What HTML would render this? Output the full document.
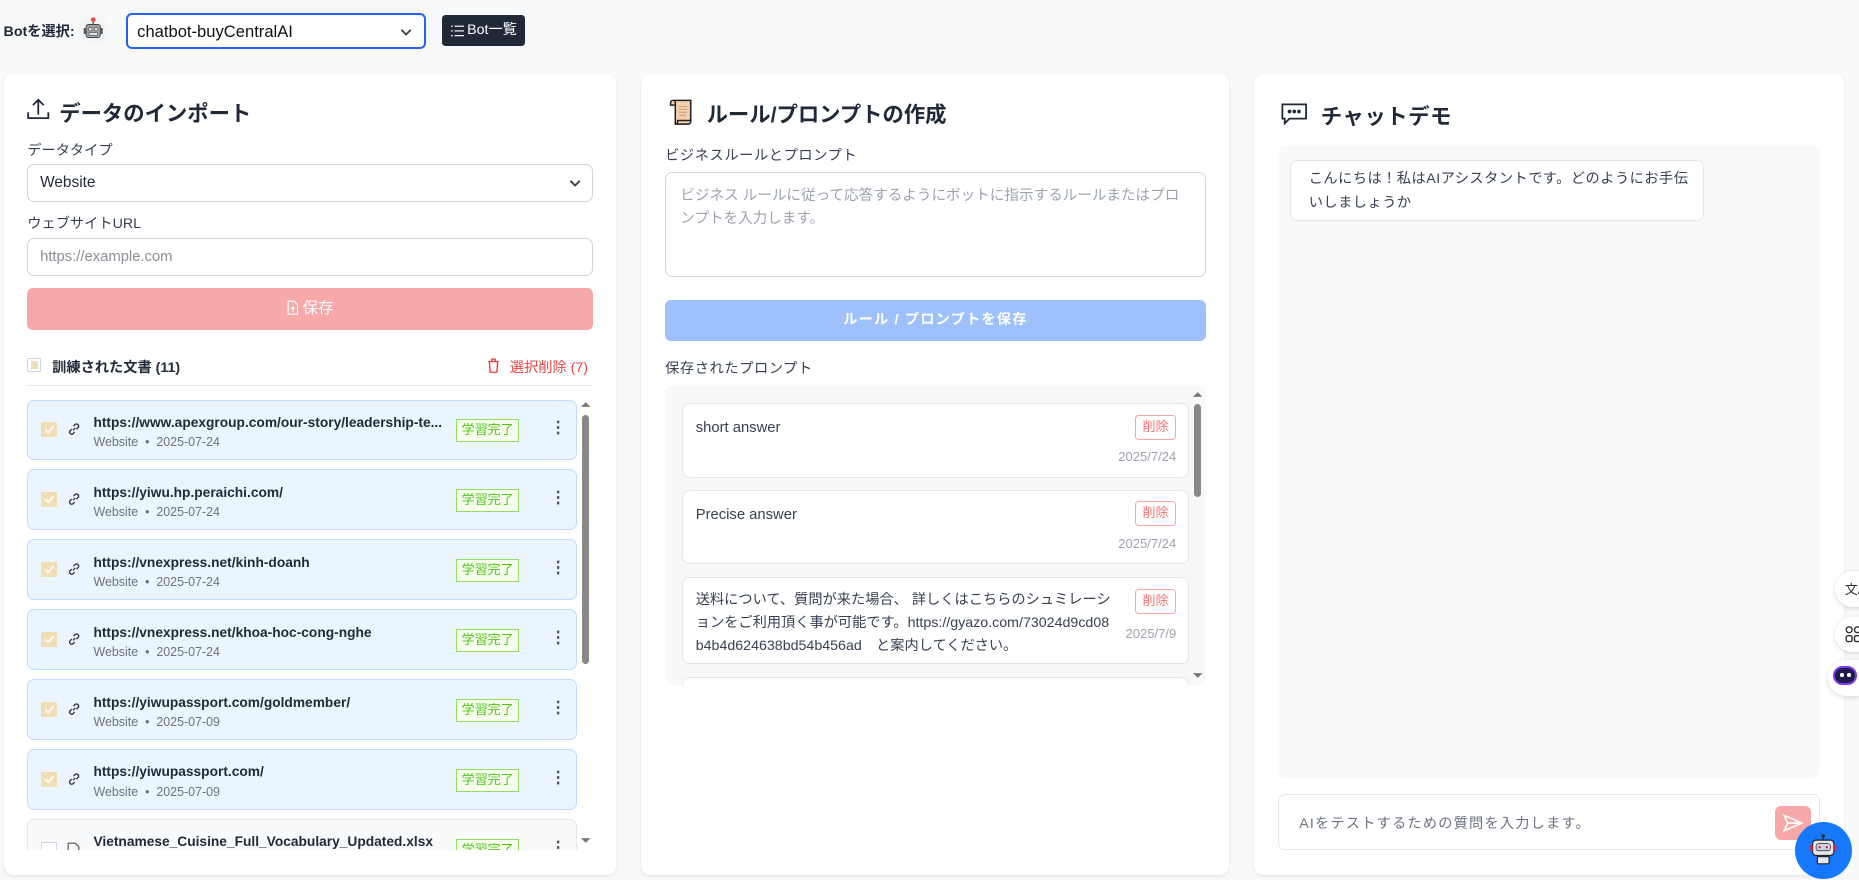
<!DOCTYPE html>
<html><head><meta charset="utf-8"><style>
html,body{margin:0;padding:0;width:1859px;height:880px;overflow:hidden;background:#f8f9fb}
#w{zoom:1.18559;width:1568px;height:742px;position:relative;font-family:"Liberation Sans","Noto Sans CJK JP",sans-serif;color:#1f2937}
.a{position:absolute}
.panel{position:absolute;top:62px;height:676px;background:#fff;border-radius:8px;box-shadow:0 1px 3px rgba(0,0,0,.08)}
.h{font-size:18px;font-weight:bold;color:#1f2937}
.lbl{font-size:12px;color:#374151}
.box{position:absolute;border:1px solid #d1d5db;border-radius:6px;background:#fff;box-sizing:border-box}
.item{position:absolute;left:20px;width:464px;height:51px;box-sizing:border-box;background:#ebf5ff;border:1px solid #bfdbfe;border-radius:6px}
.cb{position:absolute;left:11px;top:18px;width:13px;height:13px;background:#f0dfb5;border-radius:1px}
.cb svg{position:absolute;left:2px;top:2px}
.t{position:absolute;left:55px;top:12px;font-size:11.6px;font-weight:bold;color:#1f2937;white-space:nowrap;max-width:300px;overflow:hidden;text-overflow:ellipsis}
.s{position:absolute;left:55px;top:29px;font-size:10.5px;color:#6b7280;white-space:nowrap}
.bd{position:absolute;left:361px;top:16px;width:53px;height:19px;box-sizing:border-box;border:1px solid #95de64;background:#f6ffed;color:#52c41a;font-size:11px;text-align:center;line-height:17px}
.dt{position:absolute;left:440px;top:15px;font-size:14px;color:#555;font-weight:bold}
.lk{position:absolute;left:33px;top:18px}
.pi{position:absolute;left:14px;width:428px;background:#fff;border:1px solid #e5e7eb;border-radius:6px;box-sizing:border-box}
.pi .x{position:absolute;left:11px;top:11px;font-size:12.5px;color:#374151;line-height:20px}
.del{position:absolute;right:10px;top:9px;width:35px;height:21px;box-sizing:border-box;border:1px solid #fca5a5;border-radius:3px;color:#f87171;font-size:11px;text-align:center;line-height:19px}
.dd{position:absolute;right:10px;font-size:11px;color:#9ca3af}
.fc{position:absolute;left:1548px;width:40px;height:30px;border-radius:15px;background:#fff;box-shadow:0 1px 4px rgba(0,0,0,.15)}
</style></head><body><div id="w">

<!-- top bar -->
<div class="a" style="left:3px;top:18px;font-size:12px;font-weight:bold">Botを選択:</div>
<div class="a" style="left:67px;top:13px;width:24px;height:24px;border-radius:50%;background:#f3f4f6">
<svg width="24" height="24" viewBox="0 0 24 24"><line x1="12" y1="4" x2="12" y2="8" stroke="#555" stroke-width="1"/><circle cx="12" cy="4" r="2" fill="#e74c3c"/><rect x="6" y="8" width="12" height="11" rx="2" fill="#9ca3af" stroke="#444" stroke-width=".8"/><rect x="4" y="11" width="2" height="5" fill="#555"/><rect x="18" y="11" width="2" height="5" fill="#555"/><circle cx="9.5" cy="12" r="1.5" fill="#f5e6a8" stroke="#333" stroke-width=".5"/><circle cx="14.5" cy="12" r="1.5" fill="#f5e6a8" stroke="#333" stroke-width=".5"/><rect x="8.5" y="15" width="7" height="2" fill="#eee" stroke="#333" stroke-width=".4"/></svg></div>
<div class="a" style="left:106px;top:11px;width:253px;height:30px;box-sizing:border-box;border:2px solid #2563eb;border-radius:5px;background:#fff">
<div class="a" style="left:8px;top:6px;font-size:14px;color:#111">chatbot-buyCentralAI</div>
<svg class="a" style="left:229px;top:8px" width="12" height="12" viewBox="0 0 12 12"><path d="M2 4l4 4 4-4" fill="none" stroke="#444" stroke-width="1.6"/></svg></div>
<div class="a" style="left:373px;top:13px;width:70px;height:26px;background:#1f2937;border-radius:3px;color:#fff;font-size:12px;line-height:26px">
<svg class="a" style="left:7px;top:8px" width="11" height="10" viewBox="0 0 11 10"><g stroke="#fff" stroke-width="1"><line x1="0" y1="1" x2="1.5" y2="1"/><line x1="3" y1="1" x2="11" y2="1"/><line x1="0" y1="5" x2="1.5" y2="5"/><line x1="3" y1="5" x2="11" y2="5"/><line x1="0" y1="9" x2="1.5" y2="9"/><line x1="3" y1="9" x2="11" y2="9"/></g></svg>
<span class="a" style="left:21px;top:0">Bot一覧</span></div>

<!-- panel 1 -->
<div class="panel" style="left:3px;width:517px">
<svg class="a" style="left:20px;top:21px" width="19" height="19" viewBox="0 0 19 19" fill="none" stroke="#1f2937" stroke-width="1.5"><path d="M1 12v5h17v-5"/><path d="M9.5 14V2M5 6l4.5-4.5L14 6"/></svg>
<div class="a h" style="left:47px;top:20px">データのインポート</div>
<div class="a lbl" style="left:20px;top:56px">データタイプ</div>
<div class="box" style="left:20px;top:76px;width:477px;height:32px"><span class="a" style="left:10px;top:8px;font-size:13px">Website</span>
<svg class="a" style="left:455px;top:10px" width="12" height="12" viewBox="0 0 12 12"><path d="M2 4l4 4 4-4" fill="none" stroke="#444" stroke-width="1.6"/></svg></div>
<div class="a lbl" style="left:20px;top:118px">ウェブサイトURL</div>
<div class="box" style="left:20px;top:139px;width:477px;height:32px"><span class="a" style="left:10px;top:8px;font-size:12.5px;color:#8b8f96">https://example.com</span></div>
<div class="a" style="left:20px;top:181px;width:477px;height:35px;background:#f7a8a8;border-radius:5px;color:#fff;font-size:13px;text-align:center;line-height:35px">
<svg style="vertical-align:-2px" width="10" height="13" viewBox="0 0 10 13" fill="none" stroke="#fff" stroke-width="1"><path d="M1 1h5l3 3v8H1z"/><path d="M5 10V6M3.5 7.5L5 6l1.5 1.5"/></svg> 保存</div>
<div class="a" style="left:20px;top:240px;width:12px;height:12px;border:1px solid #d1d5db;box-sizing:border-box;background:#fff"><div class="a" style="left:2px;top:2px;width:6px;height:6px;background:#eedfb8"></div></div>
<div class="a" style="left:41px;top:239px;font-size:12px;font-weight:bold">訓練された文書 (11)</div>
<svg class="a" style="left:408px;top:240px" width="11" height="13" viewBox="0 0 11 13" fill="none" stroke="#ef4444" stroke-width="1.2"><path d="M1 3h9M4 3V1h3v2M2 3l.7 9h5.6L9 3"/></svg>
<div class="a" style="left:427px;top:239px;font-size:12px;color:#ef4444">選択削除 (7)</div>
<div class="a" style="left:20px;top:263px;width:477px;height:1px;background:#e5e7eb"></div>
<div class="a" style="left:0;top:274px;width:517px;height:381px;overflow:hidden">
<div class="item" style="top:1px"><div class="cb"><svg width="9" height="9" viewBox="0 0 9 9"><path d="M1 4.5l2.5 2.5L8 2" fill="none" stroke="#fff" stroke-width="1.5"/></svg></div><svg class="lk" width="12" height="12" viewBox="0 0 12 12" fill="none" stroke="#333" stroke-width="1.1"><path d="M5 7l2-2M4 6L2.5 7.5a1.8 1.8 0 002.5 2.5L6.5 8.5M8 6l1.5-1.5A1.8 1.8 0 007 2L5.5 3.5"/></svg><div class="t">https://www.apexgroup.com/our-story/leadership-te...</div><div class="s">Website &nbsp;•&nbsp; 2025-07-24</div><div class="bd">学習完了</div><div class="dt">⋮</div></div>
<div class="item" style="top:60px"><div class="cb"><svg width="9" height="9" viewBox="0 0 9 9"><path d="M1 4.5l2.5 2.5L8 2" fill="none" stroke="#fff" stroke-width="1.5"/></svg></div><svg class="lk" width="12" height="12" viewBox="0 0 12 12" fill="none" stroke="#333" stroke-width="1.1"><path d="M5 7l2-2M4 6L2.5 7.5a1.8 1.8 0 002.5 2.5L6.5 8.5M8 6l1.5-1.5A1.8 1.8 0 007 2L5.5 3.5"/></svg><div class="t">https://yiwu.hp.peraichi.com/</div><div class="s">Website &nbsp;•&nbsp; 2025-07-24</div><div class="bd">学習完了</div><div class="dt">⋮</div></div>
<div class="item" style="top:119px"><div class="cb"><svg width="9" height="9" viewBox="0 0 9 9"><path d="M1 4.5l2.5 2.5L8 2" fill="none" stroke="#fff" stroke-width="1.5"/></svg></div><svg class="lk" width="12" height="12" viewBox="0 0 12 12" fill="none" stroke="#333" stroke-width="1.1"><path d="M5 7l2-2M4 6L2.5 7.5a1.8 1.8 0 002.5 2.5L6.5 8.5M8 6l1.5-1.5A1.8 1.8 0 007 2L5.5 3.5"/></svg><div class="t">https://vnexpress.net/kinh-doanh</div><div class="s">Website &nbsp;•&nbsp; 2025-07-24</div><div class="bd">学習完了</div><div class="dt">⋮</div></div>
<div class="item" style="top:178px"><div class="cb"><svg width="9" height="9" viewBox="0 0 9 9"><path d="M1 4.5l2.5 2.5L8 2" fill="none" stroke="#fff" stroke-width="1.5"/></svg></div><svg class="lk" width="12" height="12" viewBox="0 0 12 12" fill="none" stroke="#333" stroke-width="1.1"><path d="M5 7l2-2M4 6L2.5 7.5a1.8 1.8 0 002.5 2.5L6.5 8.5M8 6l1.5-1.5A1.8 1.8 0 007 2L5.5 3.5"/></svg><div class="t">https://vnexpress.net/khoa-hoc-cong-nghe</div><div class="s">Website &nbsp;•&nbsp; 2025-07-24</div><div class="bd">学習完了</div><div class="dt">⋮</div></div>
<div class="item" style="top:237px"><div class="cb"><svg width="9" height="9" viewBox="0 0 9 9"><path d="M1 4.5l2.5 2.5L8 2" fill="none" stroke="#fff" stroke-width="1.5"/></svg></div><svg class="lk" width="12" height="12" viewBox="0 0 12 12" fill="none" stroke="#333" stroke-width="1.1"><path d="M5 7l2-2M4 6L2.5 7.5a1.8 1.8 0 002.5 2.5L6.5 8.5M8 6l1.5-1.5A1.8 1.8 0 007 2L5.5 3.5"/></svg><div class="t">https://yiwupassport.com/goldmember/</div><div class="s">Website &nbsp;•&nbsp; 2025-07-09</div><div class="bd">学習完了</div><div class="dt">⋮</div></div>
<div class="item" style="top:296px"><div class="cb"><svg width="9" height="9" viewBox="0 0 9 9"><path d="M1 4.5l2.5 2.5L8 2" fill="none" stroke="#fff" stroke-width="1.5"/></svg></div><svg class="lk" width="12" height="12" viewBox="0 0 12 12" fill="none" stroke="#333" stroke-width="1.1"><path d="M5 7l2-2M4 6L2.5 7.5a1.8 1.8 0 002.5 2.5L6.5 8.5M8 6l1.5-1.5A1.8 1.8 0 007 2L5.5 3.5"/></svg><div class="t">https://yiwupassport.com/</div><div class="s">Website &nbsp;•&nbsp; 2025-07-09</div><div class="bd">学習完了</div><div class="dt">⋮</div></div>
<div class="item" style="top:355px;background:#f9fafb;border-color:#e5e7eb"><div class="cb" style="background:#fff;border:1px solid #d1d5db;box-sizing:border-box"></div><svg class="lk" width="11" height="13" viewBox="0 0 11 13" fill="none" stroke="#555" stroke-width="1"><path d="M1 1h6l3 3v8H1z"/></svg><div class="t">Vietnamese_Cuisine_Full_Vocabulary_Updated.xlsx</div><div class="bd">学習完了</div><div class="dt">⋮</div></div>
</div>
<svg class="a" style="left:487px;top:276px" width="8" height="6"><path d="M0 5l4-4 4 4z" fill="#777"/></svg>
<div class="a" style="left:488px;top:288px;width:6px;height:210px;background:#888;border-radius:3px"></div>
<svg class="a" style="left:487px;top:644px" width="8" height="6"><path d="M0 1l4 4 4-4z" fill="#777"/></svg>
</div>

<!-- panel 2 -->
<div class="panel" style="left:541px;width:496px">
<svg class="a" style="left:22px;top:21px" width="24" height="24" viewBox="0 0 24 24"><path d="M5 2h15v18a2 2 0 01-2 2H7V4a2 2 0 00-2-2z" fill="#f5cfae" stroke="#222" stroke-width="1.3"/><path d="M5 2a2 2 0 00-2 2v2h4M7 22a2 2 0 002-2v-1h11" fill="#f5cfae" stroke="#222" stroke-width="1.3"/><g stroke="#c49a7a" stroke-width=".8"><line x1="10" y1="7" x2="17" y2="7"/><line x1="10" y1="9.5" x2="17" y2="9.5"/><line x1="10" y1="12" x2="17" y2="12"/><line x1="10" y1="14.5" x2="16" y2="14.5"/></g></svg>
<div class="a h" style="left:55px;top:21px">ルール/プロンプトの作成</div>
<div class="a lbl" style="left:20px;top:60px;letter-spacing:.5px">ビジネスルールとプロンプト</div>
<div class="box" style="left:20px;top:83px;width:456px;height:89px"><div class="a" style="left:12px;top:10px;right:10px;font-size:12.3px;color:#9ca3af;line-height:20px;letter-spacing:0">ビジネス ルールに従って応答するようにボットに指示するルールまたはプロンプトを入力します。</div></div>
<div class="a" style="left:20px;top:191px;width:456px;height:35px;background:#9ec1fb;border-radius:5px;color:#fff;font-size:12px;font-weight:bold;text-align:center;line-height:35px;letter-spacing:1px">ルール / プロンプトを保存</div>
<div class="a lbl" style="left:20px;top:240px;letter-spacing:.5px">保存されたプロンプト</div>
<div class="a" style="left:20px;top:264px;width:456px;height:252px;background:#f7f8fa;border-radius:6px;overflow:hidden">
<div class="pi" style="top:14px;height:63px"><div class="x">short answer</div><div class="del">削除</div><div class="dd" style="top:38px">2025/7/24</div></div>
<div class="pi" style="top:87px;height:63px"><div class="x">Precise answer</div><div class="del">削除</div><div class="dd" style="top:38px">2025/7/24</div></div>
<div class="pi" style="top:161px;height:73px"><div class="x" style="width:352px;top:9px;font-size:12px;line-height:19.5px;word-break:break-all">送料について、質問が来た場合、 詳しくはこちらのシュミレーションをご利用頂く事が可能です。https://gyazo.com/73024d9cd08b4b4d624638bd54b456ad　と案内してください。</div><div class="del">削除</div><div class="dd" style="top:40px">2025/7/9</div></div>
<div class="pi" style="top:245px;height:40px"></div>
</div>
<svg class="a" style="left:465px;top:268px" width="8" height="6"><path d="M0 5l4-4 4 4z" fill="#777"/></svg>
<div class="a" style="left:466px;top:279px;width:6px;height:78px;background:#888;border-radius:3px"></div>
<svg class="a" style="left:465px;top:505px" width="8" height="6"><path d="M0 1l4 4 4-4z" fill="#777"/></svg>
</div>

<!-- panel 3 -->
<div class="panel" style="left:1058px;width:497px">
<svg class="a" style="left:22px;top:24px" width="24" height="20" viewBox="0 0 24 20" fill="none" stroke="#1f2937" stroke-width="1.5"><path d="M2 2h20v12H8l-4 4v-4H2z"/><circle cx="8" cy="8" r=".8" fill="#1f2937"/><circle cx="12" cy="8" r=".8" fill="#1f2937"/><circle cx="16" cy="8" r=".8" fill="#1f2937"/></svg>
<div class="a h" style="left:56px;top:22px;letter-spacing:.5px">チャットデモ</div>
<div class="a" style="left:20px;top:60px;width:457px;height:535px;background:#f8f9fb;border-radius:8px"></div>
<div class="a" style="left:30px;top:73px;width:349px;height:51px;box-sizing:border-box;background:#fff;border:1px solid #e5e7eb;border-radius:6px"><div class="a" style="left:15px;top:6px;right:6px;font-size:12px;line-height:20px;color:#374151;letter-spacing:.4px">こんにちは！私はAIアシスタントです。どのようにお手伝いしましょうか</div></div>
<div class="box" style="left:20px;top:608px;width:457px;height:47px;border-color:#e5e7eb"><div class="a" style="left:17px;top:15px;font-size:12px;color:#6b7280;letter-spacing:1px">AIをテストするための質問を入力します。</div>
<div class="a" style="left:418px;top:9px;width:31px;height:29px;background:#f7a8a8;border-radius:5px"><svg class="a" style="left:7px;top:6px" width="17" height="17" viewBox="0 0 17 17" fill="none" stroke="#fff" stroke-width="1.4"><path d="M1 2l15 6.5L1 15l3-6.5z M4 8.5h12"/></svg></div></div>
</div>

<!-- floating -->
<div class="fc" style="top:482px"><span class="a" style="left:8px;top:6px;font-size:11px;color:#333">文A</span></div>
<div class="fc" style="top:520px"><svg class="a" style="left:8px;top:7px" width="14" height="16" viewBox="0 0 14 16" fill="none" stroke="#333" stroke-width="1.2"><circle cx="3.5" cy="4" r="2.5"/><circle cx="10.5" cy="4" r="2.5"/><rect x="1" y="9" width="5" height="5" rx="1.5"/><rect x="8" y="9" width="5" height="5" rx="1.5"/></svg></div>
<div class="fc" style="top:557px;left:1542px"><div class="a" style="left:4px;top:5px;width:20px;height:16px;border-radius:9px;border:2.5px solid #7c3aed;box-sizing:border-box;background:#1e1b4b"></div><div class="a" style="left:10px;top:11px;width:3px;height:3px;background:#fff;border-radius:50%"></div><div class="a" style="left:16px;top:11px;width:3px;height:3px;background:#fff;border-radius:50%"></div></div>
<div class="a" style="left:1514px;top:693px;width:48px;height:48px;border-radius:50%;background:#1677ff"><svg class="a" style="left:12px;top:10px" width="24" height="28" viewBox="0 0 24 28"><line x1="12" y1="2" x2="12" y2="6" stroke="#222"/><circle cx="12" cy="2.5" r="1.5" fill="#333"/><rect x="3" y="6" width="18" height="13" rx="3" fill="#e5e7eb" stroke="#222"/><rect x="6" y="9" width="12" height="6" rx="2" fill="#cbd5e1" stroke="#222" stroke-width=".6"/><circle cx="9" cy="12" r="1" fill="#e11d48"/><circle cx="15" cy="12" r="1" fill="#e11d48"/><rect x="1" y="10" width="2" height="5" fill="#e11d48"/><rect x="21" y="10" width="2" height="5" fill="#e11d48"/><rect x="7" y="20" width="10" height="6" rx="1" fill="#e5e7eb" stroke="#222"/></svg></div>

</div></body></html>
